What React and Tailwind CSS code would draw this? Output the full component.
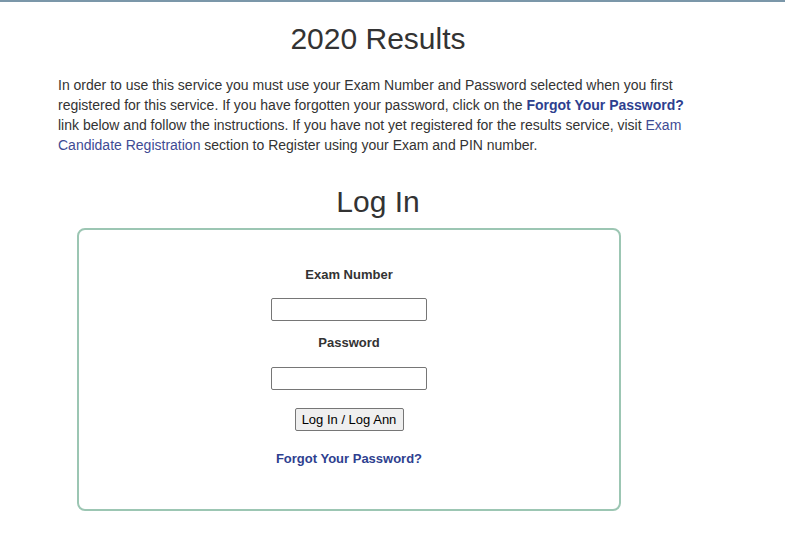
export default function App() {
  return (
    <div className="min-h-[554px] bg-white font-['Liberation_Sans',Arial,sans-serif] text-[#333]">
      <div className="h-[2px] bg-[#7b97a9]" />
      <div className="ml-[58px] w-[640px]">
        <h1 className="mt-[20px] text-center text-[30px] leading-[33px] text-[#333]">2020 Results</h1>
        <p className="mt-[20px] text-[14px] leading-[20px]">
          In order to use this service you must use your Exam Number and Password selected when you first
          registered for this service. If you have forgotten your password, click on the{" "}
          <a className="font-bold text-[#2e3f8f]">Forgot Your Password?</a> link below and follow the
          instructions. If you have not yet registered for the results service, visit{" "}
          <a className="text-[#3e4b94]">Exam Candidate Registration</a> section to Register using your Exam and
          PIN number.
        </p>
        <h2 className="mt-[30px] text-center text-[30px] leading-[33px] text-[#333]">Log In</h2>
        <div className="ml-[19px] mt-[10px] flex h-[283px] w-[544px] flex-col items-center rounded-[8px] border-2 border-[#9cc6b3] pt-[37px]">
          <label className="text-[13px] font-bold leading-[16px]">Exam Number</label>
          <input className="mt-[15px] h-[23px] w-[156px] rounded-[2px] border border-[#767676] bg-white" type="text" />
          <label className="mt-[14px] text-[13px] font-bold leading-[16px]">Password</label>
          <input className="mt-[16px] h-[23px] w-[156px] rounded-[2px] border border-[#767676] bg-white" type="password" />
          <button className="mt-[18px] h-[23px] w-[109px] rounded-[2px] border border-[#767676] bg-[#efefef] text-[13px] text-black">
            Log In / Log Ann
          </button>
          <a className="mt-[20px] text-[13px] font-bold leading-[16px] text-[#2e3f8f]">Forgot Your Password?</a>
        </div>
      </div>
    </div>
  );
}
